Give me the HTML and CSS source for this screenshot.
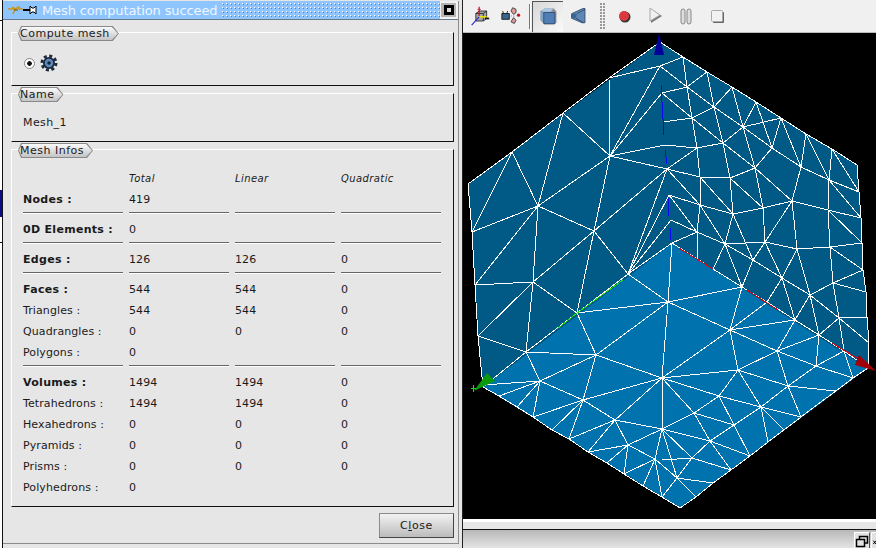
FILE: index.html
```html
<!DOCTYPE html>
<html lang="en">
<head>
    <meta charset="UTF-8">
    <title>Mesh computation succeed</title>
    <link rel="stylesheet" href="styles.css">
</head>
<body>
<div class="screen">
    <div class="desk-strip">
        <div class="strip-line"></div>
        <div class="strip-blue"></div>
        <div class="strip-tick"></div>
    </div>

    <div class="dialog">
        <div class="titlebar">
            <svg class="pin" width="30" height="14" viewBox="0 0 30 14">
                <path d="M1 6H8L12 4V6H16M5 4L8 6L6 11" fill="none" stroke="#c8961e" stroke-width="1.6"/>
                <path d="M7 7H11" stroke="#6a4a00"/>
                <path d="M16 7H23" stroke="#000" stroke-width="2"/>
                <path d="M23 3L25 5H27L29 3V11L27 9H25L23 11Z" fill="#fff" stroke="#000"/>
            </svg>
            <span class="title-text">Mesh computation succeed</span>
            <div class="title-dots"></div>
            <div class="title-btn"><span class="title-btn-mark"></span></div>
        </div>

        <div class="dialog-body">
            <div class="group group-compute">
                <span class="tab"><span class="tab-text">Compute mesh</span></span>
                <div class="algo-row">
                    <span class="radio"></span>
                    <svg class="gear" width="18" height="18" viewBox="0 0 18 18">
                        <circle cx="9" cy="9" r="6" fill="#1c2a3c"/>
                        <circle cx="9" cy="9" r="7" fill="none" stroke="#1c2a3c" stroke-width="3" stroke-dasharray="3 2.5"/>
                        <circle cx="9" cy="9" r="4.2" fill="#5f8abd"/>
                        <circle cx="9" cy="9" r="1.8" fill="#12233a"/>
                    </svg>
                </div>
            </div>

            <div class="group group-name">
                <span class="tab"><span class="tab-text">Name</span></span>
                <div class="mesh-name">Mesh_1</div>
            </div>

            <div class="group group-infos">
                <span class="tab"><span class="tab-text">Mesh Infos</span></span>
                <div class="info-grid">
                    <span></span><span class="head">Total</span><span class="head">Linear</span><span class="head">Quadratic</span>

                    <span class="bold">Nodes :</span><span>419</span><span></span><span></span>
                    <i class="sep"></i><i class="sep"></i><i class="sep"></i><i class="sep"></i>

                    <span class="bold">0D Elements :</span><span>0</span><span></span><span></span>
                    <i class="sep"></i><i class="sep"></i><i class="sep"></i><i class="sep"></i>

                    <span class="bold">Edges :</span><span>126</span><span>126</span><span>0</span>
                    <i class="sep"></i><i class="sep"></i><i class="sep"></i><i class="sep"></i>

                    <span class="bold">Faces :</span><span>544</span><span>544</span><span>0</span>
                    <span>Triangles :</span><span>544</span><span>544</span><span>0</span>
                    <span>Quadrangles :</span><span>0</span><span>0</span><span>0</span>
                    <span>Polygons :</span><span>0</span><span></span><span></span>
                    <i class="sep"></i><i class="sep"></i><i class="sep"></i><i class="sep"></i>

                    <span class="bold">Volumes :</span><span>1494</span><span>1494</span><span>0</span>
                    <span>Tetrahedrons :</span><span>1494</span><span>1494</span><span>0</span>
                    <span>Hexahedrons :</span><span>0</span><span>0</span><span>0</span>
                    <span>Pyramids :</span><span>0</span><span>0</span><span>0</span>
                    <span>Prisms :</span><span>0</span><span>0</span><span>0</span>
                    <span>Polyhedrons :</span><span>0</span><span></span><span></span>
                </div>
            </div>

            <div class="button-row">
                <div class="close-btn">C<u>l</u>ose</div>
            </div>
        </div>
    </div>

    <div class="viewer">
        <div class="toolbar">
            <div class="tool">
                <svg width="20" height="22" viewBox="0 0 24 26">
                    <path d="M7 10L11 7H20V16L16 19H7Z" fill="#a8a8a8" stroke="#222"/>
                    <path d="M7 10H16V19M16 10L20 7" fill="none" stroke="#222"/>
                    <path d="M11 13V2" stroke="#d01020" stroke-width="1.5"/>
                    <path d="M9 5H13" stroke="#d01020"/>
                    <path d="M11 14H20" stroke="#e8e000" stroke-width="2"/>
                    <path d="M18 16H23" stroke="#111" stroke-width="2"/>
                    <path d="M11 14L2 24" stroke="#3030d0" stroke-width="1.5"/>
                </svg>
            </div>
            <div class="tool">
                <svg width="20" height="20" viewBox="0 0 24 24">
                    <path d="M1 9H10V16H1Z" fill="#3a6488" stroke="#111"/>
                    <path d="M2 6L3 9M8 6L7 9" stroke="#111"/>
                    <path d="M14 2L18 4V8L15 10L12 6Z" fill="#e09a9a" stroke="#333"/>
                    <path d="M15 14L18 17L16 21L12 19Z" fill="#e09a9a" stroke="#333"/>
                    <circle cx="21" cy="11" r="2" fill="#c01020"/>
                    <path d="M12 12H13M15 11H16M15 13H16" stroke="#666"/>
                </svg>
            </div>
            <div class="tool-sep"></div>
            <div class="tool tool-active">
                <svg width="19" height="19" viewBox="0 0 24 24">
                    <path d="M2 5L7 2H19L22 6V20L19 22H7L2 17Z" fill="#222" opacity="0.45"/>
                    <path d="M2 5L7 2H18L15 6H6Z" fill="#a8c8ea"/>
                    <path d="M2 5L6 7V20L2 16Z" fill="#7ea4cc"/>
                    <path d="M6 7H20V21H6Z" fill="#4f7eb4" stroke="#27496f"/>
                </svg>
            </div>
            <div class="tool">
                <svg width="18" height="18" viewBox="0 0 24 24">
                    <path d="M2 9L17 2H20V21H16L2 15Z" fill="#5f88b6" stroke="#27415f"/>
                    <path d="M2 9L9 9L8 15L2 15Z" fill="#3d6592"/>
                    <path d="M9 9L20 3M8 15L18 21" stroke="#27415f"/>
                </svg>
            </div>
            <div class="tool-grip"></div>
            <div class="tool">
                <svg width="20" height="20" viewBox="0 0 20 20">
                    <circle cx="11" cy="11" r="5.5" fill="#333"/>
                    <circle cx="10" cy="10" r="5" fill="#d83a40"/>
                </svg>
            </div>
            <div class="tool">
                <svg width="20" height="20" viewBox="0 0 20 20">
                    <path d="M6 3V17L17 10Z" fill="#777"/>
                    <path d="M5 2V15L15 9Z" fill="#f0f0f0" stroke="#aaa"/>
                </svg>
            </div>
            <div class="tool">
                <svg width="20" height="20" viewBox="0 0 20 20">
                    <rect x="5" y="3" width="4" height="15" rx="2" fill="#ddd" stroke="#888"/>
                    <rect x="11" y="3" width="4" height="15" rx="2" fill="#ddd" stroke="#888"/>
                </svg>
            </div>
            <div class="tool">
                <svg width="20" height="20" viewBox="0 0 20 20">
                    <rect x="6" y="6" width="11" height="11" rx="1" fill="#666"/>
                    <rect x="4.5" y="4.5" width="11" height="11" rx="1" fill="#f2f2f2" stroke="#aaa"/>
                </svg>
            </div>
        </div>

        <div class="view3d">
            <svg class="mesh" width="413" height="486" viewBox="463 33 413 486">
                <polygon class="face-back" points="660,42 857,165 859,192 861,218 862,243 863,270 866,292 867,317 869,343 868,368 672,243 483,387 478,336 475,285 472,232 468,184"/>
                <polygon class="face-front" points="672,243 868,368 680,508 483,387"/>

                <!-- back left part of the mesh -->
                <path class="edges" d="M660 66L609 78M610 156L609 78M610 156L563 113M563 113L538 206M512 152L538 206M512 152L472 232M538 206L472 232M610 156L538 206M610 156L594 231M538 206L594 231M610 156L660 66M610 156L662 93M610 156L665 145M610 156L667 169M594 231L667 169M538 206L475 285M538 206L533 282M594 231L533 282M594 231L577 313M594 231L628 274M475 285L533 282M533 282L478 336M478 336L526 352M533 282L526 352M533 282L577 313M628 274L667 169M628 274L669 195M628 274L671 220M628 274L672 243M628 274L668 302M577 313L668 302M660 66L683 57"/>

                <!-- back right part of the mesh -->
                <path class="edges" d="M660 66L687 87M683 57L687 87M707 72L687 87M707 72L714 107M687 87L714 107M687 87L662 93M687 87L692 118M662 93L692 118M714 107L692 118M732 87L714 107M732 87L743 127M714 107L743 127M714 107L723 143M692 118L723 143M743 127L723 143M756 102L743 127M781 118L743 127M756 102L772 148M781 118L772 148M743 127L772 148M743 127L755 168M723 143L755 168M723 143L697 148M692 118L697 148M663 122L692 118M665 145L697 148M697 148L700 177M697 148L667 169M772 148L755 168M772 148L801 167M781 118L801 167M806 134L801 167M806 134L829 180M832 149L829 180M832 149L859 192M857 165L859 192M829 180L859 192M829 180L861 218M829 180L801 167M801 167L792 201M755 168L792 201M755 168L730 178M723 143L730 178M755 168L763 208M730 178L763 208M730 178L733 214M730 178L700 177M700 177L667 169M700 177L700 205M700 177L733 214M667 169L700 205M669 195L700 205M700 205L733 214M792 201L763 208M763 208L733 214M792 201L828 210M829 180L828 210M792 201L797 249M828 210L830 247M828 210L862 243M828 210L861 218M763 208L765 242M792 201L765 242M733 214L753 260M733 214L725 244M700 205L697 232M669 195L697 232M700 205L725 244M697 232L725 244M697 232L672 243M697 232L671 220M725 244L765 242M765 242L753 260M725 244L753 260M765 242L797 249M830 247L797 249M830 247L862 243M830 247L863 270M797 249L782 278M830 247L833 283M697 232L697 259M725 244L713 269M725 244L742 287M753 260L742 287M753 260L782 278M782 278L767 302M782 278L795 320M782 278L810 295M810 295L795 320M810 295L833 283M810 295L819 335M810 295L839 318M833 283L839 318M833 283L866 292M839 318L867 317M839 318L869 343M839 318L819 335M839 318L844 351M797 249L810 295M863 270L833 283M765 242L782 278"/>

                <!-- front face, left half -->
                <path class="edges" d="M672 243L668 302M668 302L742 287M577 313L596 355M526 352L596 355M596 355L668 302M596 355L540 381M526 352L540 381M540 381L483 385M540 381L583 400M596 355L583 400M596 355L662 378M583 400L662 378M583 400L615 420M615 420L662 378M615 420L662 429M615 420L628 445M628 445L662 429M628 445L655 459M662 429L655 459M662 378L662 429M668 302L662 378M540 381L499 396M540 381L517 407M540 381L533 417M583 400L533 417M583 400L552 430M583 400L569 439M615 420L569 439M615 420L588 452M628 445L588 452M628 445L607 463M628 445L624 474M655 459L624 474M655 459L643 486M655 459L662 497M655 459L677 478M662 429L677 478M668 302L730 330"/>

                <!-- front face, right half -->
                <path class="edges" d="M730 330L742 287M730 330L767 302M730 330L795 320M730 330L738 370M730 330L662 378M662 378L738 370M738 370L777 351M730 330L777 351M777 351L795 320M777 351L819 335M777 351L816 366M819 335L816 366M816 366L844 351M816 366L853 378M777 351L788 386M816 366L788 386M788 386L738 370M788 386L761 407M738 370L761 407M738 370L719 396M719 396L662 378M719 396L761 407M788 386L836 391M788 386L801 417M761 407L784 430M761 407L801 417M761 407L768 442M761 407L734 425M719 396L694 413M719 396L734 425M694 413L662 378M694 413L734 425M694 413L710 441M734 425L710 441M694 413L662 429M662 429L710 441M710 441L692 458M734 425L750 456M710 441L750 456M710 441L731 470M692 458L731 470M692 458L677 478M677 478L713 483M677 478L696 497M677 478L662 497M662 429L692 458M662 460L692 458M844 351L853 378"/>

                <!-- outline -->
                <polyline class="edges" points="660,42 683,57 707,72 732,87 756,102 781,118 806,134 832,149 857,165 859,192 861,218 862,243 863,270 866,292 867,317 869,343 868,368 853,378 836,391 818,404 801,417 784,430 768,442 750,456 731,470 713,483 696,497 680,508 662,497 643,486 624,474 607,463 588,452 569,439 552,430 533,417 517,407 499,396 483,387 478,336 475,285 472,232 468,184 512,152 563,113 609,78 660,42"/>
                <polyline class="edges" points="672,243 713,269 742,287 767,302 795,320 819,335 844,351 868,368"/>
                <polyline class="edges" points="672,243 628,274 577,313 526,352 483,387"/>

                <!-- axes -->
                <path class="axis-z" d="M661 85L664 135M665 150L667 164M668 198L669 216M670 228L671 240"/>
                <path class="axis-x" d="M679 248L713 269M747 290L778 310M832 343L860 360"/>
                <path class="axis-y" d="M557 329L577 313L623 280"/>
                <polygon class="arrow-z" points="659,33 664,55 654,55"/>
                <polygon class="arrow-y" points="474,391 487,373 495,381"/>
                <path class="axis-y" d="M473 385V392M471 388H476"/>
                <polygon class="arrow-x" points="876,371 859,355 855,365"/>
            </svg>
        </div>

        <div class="view-footer"></div>
        <div class="statusbar">
            <div class="status-btn">
                <svg width="14" height="14" viewBox="0 0 14 14">
                    <path d="M4.5 4V1.5H12.5V8H10" fill="none" stroke="#000" stroke-width="1.5"/>
                    <rect x="1.5" y="4.5" width="8" height="7" fill="none" stroke="#000" stroke-width="1.5"/>
                </svg>
            </div>
            <div class="status-btn status-btn-cut">
                <svg width="6" height="14" viewBox="0 0 6 14">
                    <path d="M2 5L6 10M6 5L2 10" stroke="#000" stroke-width="1.5"/>
                </svg>
            </div>
        </div>
    </div>
</div>
</body>
</html>
```

FILE: styles.css
```css
html, body {
    margin: 0;
    padding: 0;
    background-color: #e6e6e6;
}
.screen {
    display: flex;
    width: 876px;
    height: 548px;
    overflow: hidden;
    font-family: "DejaVu Sans", sans-serif;
    font-size: 11px;
    color: #1a1a1a;
}

/* bit of the desktop left of the dialog */
.desk-strip {
    flex: none;
    width: 2px;
    background-color: #fff;
    border-right: 1px solid #111;
}
.strip-line {
    height: 1px;
    margin-top: 20px;
    background-color: #111;
}
.strip-blue {
    height: 27px;
    margin-top: 169px;
    background-color: #0a0a8c;
}
.strip-tick {
    height: 1px;
    margin-top: 25px;
    background-color: #111;
}

/* dialog */
.dialog {
    flex: none;
    display: flex;
    flex-direction: column;
    width: 456px;
    height: 543px;
    margin-top: 1px;
    margin-right: 3px;
    box-sizing: border-box;
    border-right: 1px solid #8c8c8c;
    border-bottom: 1px solid #8c8c8c;
    background-color: #e6e6e6;
}
.titlebar {
    flex: none;
    display: flex;
    align-items: center;
    height: 19px;
    box-sizing: border-box;
    border-bottom: 1px solid #66788c;
    background-color: #8fc5ff;
}
.pin {
    flex: none;
    margin-left: 4px;
}
.title-text {
    flex: none;
    margin-left: 5px;
    font-size: 13px;
    letter-spacing: -0.12px;
    color: #eef6ff;
    white-space: nowrap;
}
.title-dots {
    flex: 1;
    height: 17px;
    margin-left: 5px;
    background-image:
        radial-gradient(circle at 0.5px 0.5px, #fff 0.6px, transparent 0.7px),
        radial-gradient(circle at 1.5px 1.5px, #4f86c6 0.6px, transparent 0.7px);
    background-size: 4px 4px;
    background-position: 0 1px;
}
.title-btn {
    flex: none;
    display: flex;
    align-items: center;
    justify-content: center;
    width: 18px;
    height: 18px;
    box-sizing: border-box;
    border: 2px solid #f2f2f2;
    border-left: 1px solid #f2f2f2;
    background-color: #b4b4b4;
}
.title-btn-mark {
    width: 4px;
    height: 4px;
    border: 3px solid #000;
    background-color: #d8d8d8;
}
.dialog-body {
    flex: 1;
    display: flex;
    flex-direction: column;
    padding: 12px 4px 0 8px;
}

/* group boxes with the arrow shaped title */
.group {
    box-sizing: border-box;
    border-top: 1px solid #fff;
    border-left: 1px solid #fff;
    border-right: 1px solid #111;
    border-bottom: 1px solid #111;
}
.group-compute {
    height: 54px;
}
.group-name {
    height: 49px;
    margin-top: 7px;
}
.group-infos {
    height: 358px;
    margin-top: 7px;
}
.tab {
    display: block;
    width: max-content;
    height: 15px;
    margin: -7px 0 0 6px;
    padding: 0 9px 0 2px;
    position: relative;
    background-color: #8a8a8a;
    clip-path: polygon(3px 0, calc(100% - 6px) 0, 100% 50%, calc(100% - 6px) 100%, 3px 100%, 0 50%);
}
.tab::before {
    content: "";
    position: absolute;
    top: 1px;
    right: 1px;
    bottom: 1px;
    left: 1px;
    background: linear-gradient(#fafafa, #c4c4c4);
    clip-path: polygon(3px 0, calc(100% - 6px) 0, 100% 50%, calc(100% - 6px) 100%, 3px 100%, 0 50%);
}
.tab-text {
    position: relative;
    line-height: 15px;
    letter-spacing: 0.5px;
    white-space: nowrap;
}
.algo-row {
    display: flex;
    align-items: center;
    gap: 5px;
    margin: 13px 0 0 12px;
}
.radio {
    flex: none;
    width: 9px;
    height: 9px;
    border: 1px solid #8a8a8a;
    border-radius: 50%;
    background: radial-gradient(circle, #111 0 2px, #fff 2.6px);
}
.gear {
    flex: none;
}
.mesh-name {
    margin: 14px 0 0 11px;
    letter-spacing: 0.4px;
}

/* mesh info table */
.info-grid {
    display: grid;
    grid-template-columns: repeat(4, 100px);
    column-gap: 6px;
    line-height: 21px;
    margin: 10px 0 0 11px;
    letter-spacing: 0.1px;
}
.sep {
    display: block;
    height: 2px;
    margin: 2px 0 5px;
    background: linear-gradient(#666 50%, #fff 50%);
}
.head {
    font-style: italic;
    font-size: 10px;
    letter-spacing: 0.4px;
}
.bold {
    font-weight: bold;
    letter-spacing: 0.3px;
    white-space: nowrap;
}
.button-row {
    display: flex;
    justify-content: flex-end;
    margin-top: 6px;
}
.close-btn {
    width: 75px;
    height: 25px;
    box-sizing: border-box;
    border: 1px solid #8a8a8a;
    border-right-color: #444;
    border-bottom-color: #444;
    background: linear-gradient(#f2f2f2, #bcbcbc);
    line-height: 24px;
    text-align: center;
    letter-spacing: 0.6px;
}

/* right part, 3d viewer */
.viewer {
    flex: none;
    display: flex;
    flex-direction: column;
    width: 414px;
    height: 548px;
    box-sizing: border-box;
    border-left: 1px solid #222;
}
.toolbar {
    flex: none;
    display: flex;
    align-items: center;
    height: 33px;
    padding-left: 1px;
    box-sizing: border-box;
    border-bottom: 1px solid #bbb;
    background-color: #f0f0f0;
}
.tool {
    flex: none;
    display: flex;
    align-items: center;
    justify-content: center;
    width: 31px;
    height: 31px;
    box-sizing: border-box;
}
.tool-active {
    border-top: 1px solid #555;
    border-left: 1px solid #555;
    background: linear-gradient(135deg, #d8d8d8, #fbfbfb);
}
.tool-sep {
    flex: none;
    width: 1px;
    height: 25px;
    margin: 0 1px 0 3px;
    background-color: #777;
    border-right: 1px solid #fff;
}
.tool-grip {
    flex: none;
    width: 6px;
    height: 26px;
    margin: 0 2px 0 6px;
    background-image: radial-gradient(circle at 1px 1px, #999 0.8px, transparent 1px);
    background-size: 3px 3px;
}
.view3d {
    flex: none;
    height: 486px;
    background-color: #000;
}
.mesh {
    display: block;
}
.face-back {
    fill: #005a85;
}
.face-front {
    fill: #0073ae;
}
.edges {
    fill: none;
    stroke: #fff;
    stroke-width: 1;
    shape-rendering: crispEdges;
}
.axis-z {
    fill: none;
    stroke: #0a0af0;
    stroke-width: 1;
    shape-rendering: crispEdges;
}
.axis-x {
    fill: none;
    stroke: #e00010;
    stroke-width: 1;
    shape-rendering: crispEdges;
}
.axis-y {
    fill: none;
    stroke: #18e018;
    stroke-width: 1;
    shape-rendering: crispEdges;
}
.arrow-z {
    fill: #00009a;
}
.arrow-y {
    fill: #0a9a0a;
}
.arrow-x {
    fill: #a00008;
}
.view-footer {
    flex: none;
    height: 11px;
    box-sizing: border-box;
    border-top: 3px solid #fff;
    border-bottom: 1px solid #111;
    background-color: #e6e6e6;
}
.statusbar {
    flex: 1;
    display: flex;
    justify-content: flex-end;
    gap: 1px;
    padding-top: 2px;
    background: linear-gradient(#b8b8b8, #e6e6e6);
}
.status-btn {
    flex: none;
    display: flex;
    justify-content: center;
    width: 16px;
    padding-top: 2px;
    box-sizing: border-box;
    border-top: 1px solid #fff;
    border-left: 1px solid #fff;
    border-right: 1px solid #555;
    background-color: #e2e2e2;
}
.status-btn-cut {
    width: 5px;
    border-right: 0;
    overflow: hidden;
}
```
